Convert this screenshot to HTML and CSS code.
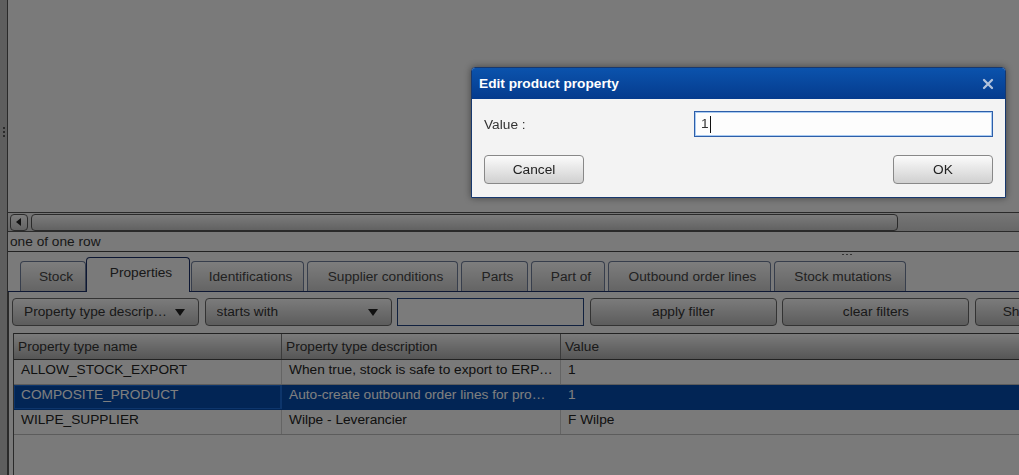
FILE: index.html
```html
<!DOCTYPE html>
<html lang="en">
<head>
<meta charset="utf-8">
<title>Products</title>
<link rel="stylesheet" href="styles.css">
</head>
<body>
<div class="app">
  <div class="side"><span class="grip-v"></span></div>
  <div class="main">
    <div class="upper">
      <div class="blank"></div>
      <div class="hscroll">
        <div class="sb-arrow">
          <svg width="6" height="8" viewBox="0 0 6 8"><path d="M5 0 L0 4 L5 8 Z" fill="#222"/></svg>
        </div>
        <div class="sb-thumb"></div>
      </div>
      <div class="status">one of one row</div>
    </div>
    <div class="splitter"><span class="grip-h"></span></div>
    <div class="tabs">
      <div class="tab t-stock">Stock</div>
      <div class="tab active t-props">Properties</div>
      <div class="tab t-ident">Identifications</div>
      <div class="tab t-supp">Supplier conditions</div>
      <div class="tab t-parts">Parts</div>
      <div class="tab t-partof">Part of</div>
      <div class="tab t-out">Outbound order lines</div>
      <div class="tab t-mut">Stock mutations</div>
    </div>
    <div class="panel">
      <div class="filters">
        <div class="ctl select"><span class="sel-text">Property type description</span><span class="caret-down"></span></div>
        <div class="ctl select"><span class="sel-text">starts with</span><span class="caret-down"></span></div>
        <div class="ctl textbox"></div>
        <div class="ctl btn">apply filter</div>
        <div class="ctl btn">clear filters</div>
        <div class="ctl btn">Show property details</div>
      </div>
      <div class="grid">
        <div class="row head">
          <div class="cell">Property type name</div>
          <div class="cell">Property type description</div>
          <div class="cell">Value</div>
        </div>
        <div class="row">
          <div class="cell">ALLOW_STOCK_EXPORT</div>
          <div class="cell">When true, stock is safe to export to ERP systems</div>
          <div class="cell">1</div>
        </div>
        <div class="row selected">
          <div class="cell focus">COMPOSITE_PRODUCT</div>
          <div class="cell">Auto-create outbound order lines for product parts</div>
          <div class="cell">1</div>
        </div>
        <div class="row">
          <div class="cell">WILPE_SUPPLIER</div>
          <div class="cell">Wilpe - Leverancier</div>
          <div class="cell">F Wilpe</div>
        </div>
      </div>
    </div>
  </div>
</div>

<div class="overlay"></div>

<div class="dialog">
  <div class="dlg-title">
    <span>Edit product property</span>
    <svg class="dlg-close" width="12" height="12" viewBox="0 0 12 12"><path d="M2 2 L10 10 M10 2 L2 10" stroke="#b3c3dc" stroke-width="2.3" stroke-linecap="round"/></svg>
  </div>
  <div class="dlg-body">
    <div class="dlg-field">
      <label class="dlg-label">Value :</label>
      <div class="dlg-input">1<span class="text-caret"></span></div>
    </div>
    <div class="dlg-actions">
      <div class="dlg-btn">Cancel</div>
      <div class="dlg-btn">OK</div>
    </div>
  </div>
</div>
</body>
</html>
```

FILE: styles.css
```css
* { box-sizing: border-box; }

html, body {
  margin: 0;
  width: 1019px;
  height: 475px;
  overflow: hidden;
}

body {
  background: #f4f4f4;
  font-family: "Liberation Sans", Arial, sans-serif;
  font-size: 13.7px;
  color: #333;
}

.app {
  display: flex;
  height: 475px;
}

/* collapsed side panel with its splitter grip */
.side {
  width: 8px;
  flex: 0 0 8px;
  background: #bdbdbd;
  border-right: 1px solid #555;
  display: flex;
  justify-content: center;
  padding-top: 127px;
}

.grip-v {
  width: 2px;
  height: 10px;
  background: repeating-linear-gradient(#555 0 2px, transparent 2px 4px);
}

.main {
  flex: 1;
  min-width: 0;
  display: flex;
  flex-direction: column;
  overflow: hidden;
}

/* upper list pane */
.upper {
  display: flex;
  flex-direction: column;
}

.blank { height: 212px; }

.hscroll {
  height: 20px;
  border-top: 1px solid #555;
  border-bottom: 1px solid #555;
  background: linear-gradient(#ececec, #cfcfcf);
  display: flex;
  align-items: center;
  gap: 3px;
  padding-left: 2px;
}

.sb-arrow {
  width: 18px;
  height: 17px;
  border: 1px solid #555;
  border-radius: 4px;
  background: linear-gradient(#f8f8f8, #c8c8c8);
  display: flex;
  align-items: center;
  justify-content: center;
}

.sb-thumb {
  width: 867px;
  height: 17px;
  border: 1px solid #555;
  border-radius: 4px;
  background: linear-gradient(#f8f8f8, #c4c4c4);
}

.status {
  height: 20px;
  line-height: 19px;
  padding-left: 2px;
  color: #333;
  border-bottom: 1px solid #444;
}

.splitter {
  height: 5px;
  display: flex;
  justify-content: flex-end;
  padding-right: 167px;
  padding-top: 2px;
}

.grip-h {
  width: 10px;
  height: 1px;
  background: repeating-linear-gradient(90deg, #666 0 2px, transparent 2px 4px);
}

/* tab strip */
.tabs {
  height: 35px;
  display: flex;
  align-items: flex-end;
  gap: 3px;
  padding-left: 12px;
  border-bottom: 1px solid #1a2f66;
  position: relative;
}

.tab {
  height: 30px;
  line-height: 29px;
  text-align: center;
  padding-left: 6px;
  color: #444;
  background: linear-gradient(#fbfbfb, #c9c9c9);
  border: 1px solid #6f7c98;
  border-bottom: 0;
  border-radius: 4px 4px 0 0;
  white-space: nowrap;
}

.tab.active {
  height: 35px;
  line-height: 30px;
  margin-bottom: -1px;
  background: #f4f4f4;
  border-color: #1a2f66;
  color: #333;
  margin-left: -3px;
  margin-right: -2px;
}

.t-stock { width: 66px; }
.t-props { width: 104px; }
.t-ident { width: 113px; }
.t-supp { width: 151px; }
.t-parts { width: 67px; }
.t-partof { width: 74px; }
.t-out { width: 163px; }
.t-mut { width: 132px; }

/* tab content */
.panel {
  flex: 1;
  display: flex;
  flex-direction: column;
  border-left: 1px solid #555;
  padding: 6px 0 0 3px;
  min-width: 0;
}

.filters {
  display: flex;
  gap: 5.6px;
  height: 28px;
  flex: 0 0 28px;
  overflow: hidden;
}

.ctl {
  flex: 0 0 187px;
  height: 28px;
  border: 1px solid #666;
  border-radius: 4px;
  background: linear-gradient(#f7f7f7, #b9b9b9);
  line-height: 26px;
  color: #333;
  white-space: nowrap;
  overflow: hidden;
}

.btn { text-align: center; }

.select {
  display: flex;
  align-items: center;
  padding: 0 13px 0 11px;
}

.sel-text {
  flex: 1;
  overflow: hidden;
  text-overflow: ellipsis;
  white-space: nowrap;
  padding-right: 6px;
}

.caret-down {
  width: 0;
  height: 0;
  border-left: 5px solid transparent;
  border-right: 5px solid transparent;
  border-top: 7px solid #222;
}

.textbox {
  background: #f6f6f6;
  border: 1px solid #23437e;
  border-radius: 0;
}

/* property table */
.grid {
  flex: 1;
  margin-top: 7px;
  margin-left: 1px;
  border-left: 1px solid #555;
}

.row {
  display: grid;
  grid-template-columns: 268px 279px 1fr;
  height: 25px;
  border-bottom: 1px solid #b8b8b8;
}

.cell {
  padding-left: 7px;
  padding-right: 7px;
  line-height: 20px;
  border-right: 1px solid #c8c8c8;
  white-space: nowrap;
  overflow: hidden;
  text-overflow: ellipsis;
  color: #222;
}

.cell:last-child { border-right: 0; }

.row.head {
  height: 27px;
  border-top: 1px solid #444;
  border-bottom: 1px solid #444;
  background: linear-gradient(#f6f6f6, #acacac);
}

.row.head .cell {
  padding-left: 4px;
  line-height: 26px;
  border-right-color: #777;
  color: #333;
}

.row.selected {
  background: #044aaa;
  border-bottom-color: #044aaa;
}

.row.selected .cell {
  color: #fff;
  border-right-color: #044aaa;
}

.row.selected .cell.focus {
  box-shadow: inset 0 0 0 1px #1a6ad6;
  border-right: 1px solid #1a6ad6;
}

/* modal shade */
.overlay {
  position: fixed;
  inset: 0;
  background: rgba(0, 0, 0, 0.5);
}

/* edit dialog */
.dialog {
  position: absolute;
  left: 471px;
  top: 67px;
  width: 535px;
  height: 131px;
  border: 1px solid #17386e;
  border-radius: 4px 4px 0 0;
  background: #f3f3f3;
  box-shadow: 0 0 7px rgba(0, 0, 0, 0.45);
  display: flex;
  flex-direction: column;
}

.dlg-title {
  height: 31px;
  flex: 0 0 31px;
  background: linear-gradient(#0b53ad, #053b8d);
  border-radius: 3px 3px 0 0;
  display: flex;
  align-items: center;
  justify-content: space-between;
  padding: 0 11px 0 7px;
  color: #fff;
  font-weight: bold;
}

.dlg-body {
  flex: 1;
  padding: 12px 12px 0 12px;
}

.dlg-field {
  display: flex;
  align-items: center;
  justify-content: space-between;
}

.dlg-label { color: #333; }

.dlg-input {
  width: 299px;
  height: 26px;
  border: 1px solid #2d5ea9;
  box-shadow: inset 0 0 0 1px #a9cbf2;
  background: #fdfdfd;
  padding-left: 6px;
  line-height: 24px;
  color: #333;
  display: flex;
  align-items: center;
}

.text-caret {
  display: inline-block;
  width: 1px;
  height: 17px;
  background: #111;
  margin-left: 1px;
}

.dlg-actions {
  display: flex;
  justify-content: space-between;
  margin-top: 18px;
}

.dlg-btn {
  width: 100px;
  height: 29px;
  border: 1px solid #888;
  border-radius: 4px;
  background: linear-gradient(#fbfbfb, #d0d0d0);
  text-align: center;
  line-height: 27px;
  color: #222;
}
```
